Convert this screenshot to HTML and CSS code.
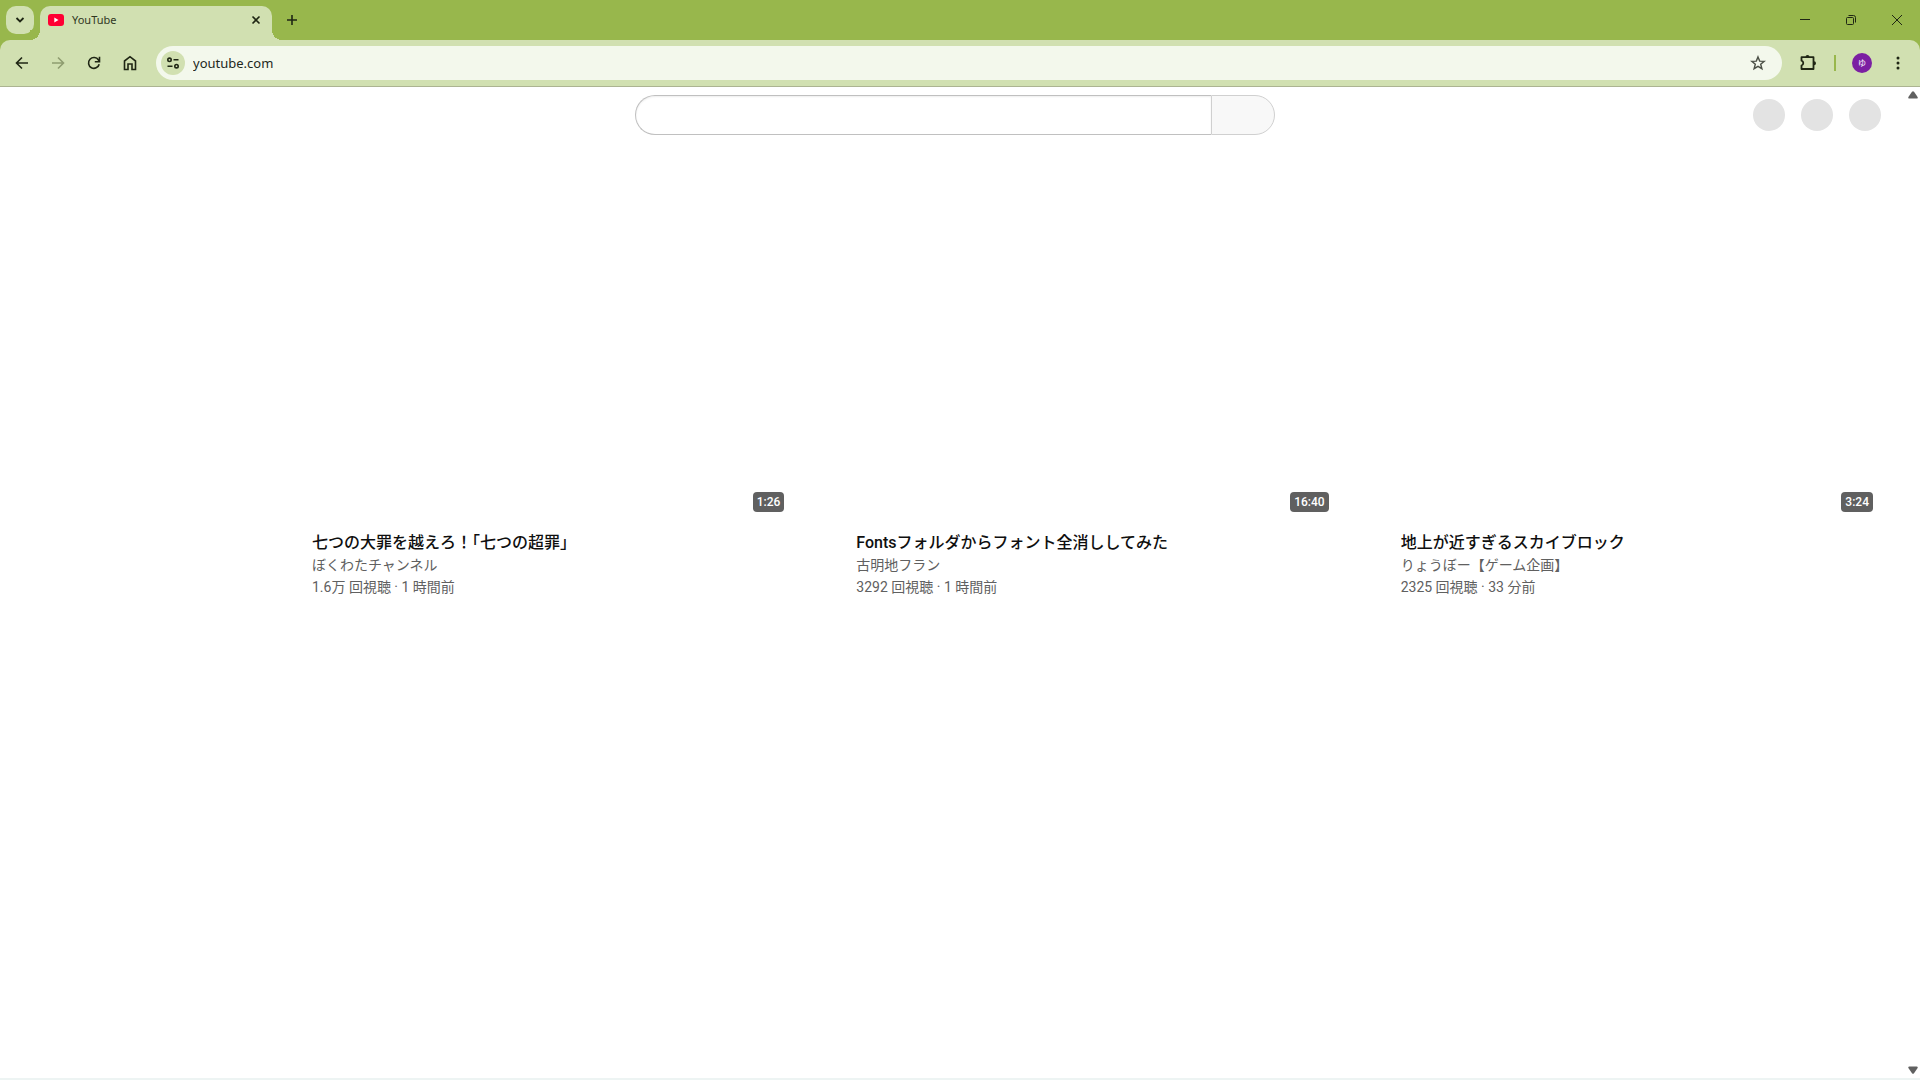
FILE: index.html
```html
<!DOCTYPE html>
<html lang="ja">
<head>
<meta charset="utf-8">
<title>YouTube</title>
<link rel="stylesheet" href="styles.css">
</head>
<body>
<header class="chrome">
  <div class="tab-strip">
    <button class="tab-search" aria-label="タブを検索"><svg width="12" height="12" viewBox="0 0 12 12"><path d="M2.500 4l3.500 3.500L9.500 4" class="line bold"/></svg></button>
    <div class="tab">
      <svg width="16" height="12" viewBox="0 0 16 12"><rect width="16" height="12" rx="3" fill="#ff0033"/><path d="M6.300 3.500v5l4.200-2.500z" fill="#fff"/></svg>
      <span class="tab-title">YouTube</span>
      <button class="tab-close" aria-label="閉じる"><svg width="10" height="10" viewBox="0 0 10 10"><path d="M1.500 1.500l7 7M8.500 1.500l-7 7" class="line"/></svg></button>
    </div>
    <button class="new-tab" aria-label="新しいタブ"><svg width="12" height="12" viewBox="0 0 12 12"><path d="M6 1v10M1 6h10" class="line"/></svg></button>
    <div class="window-controls">
      <button aria-label="最小化"><svg width="10" height="10" viewBox="0 0 10 10"><path d="M0 4.500h10" class="line thin"/></svg></button>
      <button aria-label="元に戻す"><svg width="10" height="10" viewBox="0 0 10 10"><rect x=".5" y="2.500" width="7" height="7" rx="1" class="line thin"/><path d="M2.500.5H7.500a2 2 0 0 1 2 2v5" class="line thin"/></svg></button>
      <button aria-label="閉じる"><svg width="10" height="10" viewBox="0 0 10 10"><path d="M0 0l10 10M10 0L0 10" class="line thin"/></svg></button>
    </div>
  </div>
  <div class="toolbar">
    <nav class="nav-buttons">
      <button aria-label="戻る"><svg width="14" height="14" viewBox="0 0 14 14"><path d="M13 7H2M7 1.500L1.500 7 7 12.500" class="line"/></svg></button>
      <button class="inactive" aria-label="進む" disabled><svg width="14" height="14" viewBox="0 0 14 14"><path d="M1 7h11M7 1.500L12.500 7 7 12.500" class="line"/></svg></button>
      <button aria-label="再読み込み"><svg width="14" height="14" viewBox="0 0 14 14"><path d="M12.200 8.200A5.400 5.400 0 1 1 11.500 4L12.500 5.500M12.500.8v4.900H7.800" class="line"/></svg></button>
      <button aria-label="ホーム"><svg width="14" height="16" viewBox="0 0 14 16"><path d="M1.500 6L7 1.700 12.500 6v8.500H9V9H5v5.500H1.500z" class="line"/></svg></button>
    </nav>
    <div class="omnibox">
      <button class="site-info" aria-label="サイト情報"><svg width="14" height="12" viewBox="0 0 14 12"><circle cx="3.500" cy="2.800" r="1.700" class="line"/><path d="M7.500 2.800H12.500M1.500 9.200H6.500" class="line"/><circle cx="10.500" cy="9.200" r="1.700" class="line"/></svg></button>
      <input class="address" type="text" value="youtube.com" aria-label="アドレス">
      <button class="bookmark" aria-label="ブックマーク"><svg width="16" height="16" viewBox="0 0 16 16"><path d="M8 1.900l1.700 4.200 4.500.3-3.500 2.900 1.200 4.400L8 11.300l-3.900 2.400 1.200-4.400-3.500-2.900 4.500-.3z" class="star"/></svg></button>
    </div>
    <div class="toolbar-end">
      <button aria-label="拡張機能"><svg width="18" height="18" viewBox="0 0 18 18"><path d="M2.500 3.200H14.500V15H2.500V11.500A2.500 2.500 0 0 0 2.500 6.700z" class="line bold join"/><path d="M6.500 3a2 2 0 0 1 4 0zM15 7.200a2 2 0 0 1 0 4z"/></svg></button>
      <span class="divider"></span>
      <button aria-label="プロフィール"><span class="profile">ゆ</span></button>
      <button aria-label="メニュー"><svg width="4" height="14" viewBox="0 0 4 14"><circle cx="2" cy="2" r="1.500"/><circle cx="2" cy="7" r="1.500"/><circle cx="2" cy="12" r="1.500"/></svg></button>
    </div>
  </div>
</header>
<div class="viewport">
  <div class="page">
    <div class="masthead">
      <form class="search">
        <input class="search-field" type="text" aria-label="検索">
        <button class="search-button" type="button" aria-label="検索"></button>
      </form>
      <div class="placeholders"><span class="dot"></span><span class="dot"></span><span class="dot"></span></div>
    </div>
    <main class="feed">
      <article class="video">
        <div class="thumb"><span class="duration">1:26</span></div>
        <div class="details">
          <h3 class="title">七つの大罪を越えろ！<span class="half-bracket">「</span>七つの超罪」</h3>
          <p class="meta">ぼくわたチャンネル</p>
          <p class="meta">1.6万 回視聴 · 1 時間前</p>
        </div>
      </article>
      <article class="video">
        <div class="thumb"><span class="duration">16:40</span></div>
        <div class="details">
          <h3 class="title">Fontsフォルダからフォント全消ししてみた</h3>
          <p class="meta">古明地フラン</p>
          <p class="meta">3292 回視聴 · 1 時間前</p>
        </div>
      </article>
      <article class="video">
        <div class="thumb"><span class="duration">3:24</span></div>
        <div class="details">
          <h3 class="title">地上が近すぎるスカイブロック</h3>
          <p class="meta">りょうぼー【ゲーム企画】</p>
          <p class="meta">2325 回視聴 · 33 分前</p>
        </div>
      </article>
    </main>
  </div>
  <div class="scrollbar">
    <button aria-label="上へ"><svg width="10" height="8" viewBox="0 0 10 8"><path d="M4 .7q1-1 2 0L9.600 6q.5 1.500-1 1.500h-7.200Q-.1 7.500.4 6z"/></svg></button>
    <button aria-label="下へ"><svg width="10" height="8" viewBox="0 0 10 8"><path d="M4 7.300q1 1 2 0L9.600 2q.5-1.500-1-1.500h-7.200Q-.1.5.4 2z"/></svg></button>
  </div>
</div>
</body>
</html>
```
FILE: styles.css
```css
* {
  box-sizing: border-box;
}

body {
  margin: 0;
  min-height: 100vh;
  display: flex;
  flex-direction: column;
  background: #fff;
  font-family: Roboto, "Noto Sans CJK JP", sans-serif;
}

button {
  display: flex;
  align-items: center;
  justify-content: center;
  padding: 0;
  border: 0;
  background: none;
  color: #1f2614;
}

svg {
  display: block;
  flex: none;
  fill: currentColor;
}

.line {
  fill: none;
  stroke: currentColor;
  stroke-width: 1.6;
}

.thin {
  stroke-width: 1;
}

.bold {
  stroke-width: 1.8;
}

.join {
  stroke-linejoin: round;
}

.star {
  fill: none;
  stroke: #4b5046;
  stroke-width: 1.4;
}

/* Browser frame */
.chrome {
  background: #98b74c;
}

.tab-strip {
  display: flex;
  height: 40px;
  padding: 6px 0 0 6px;
}

.tab-search {
  width: 28px;
  height: 28px;
  border-radius: 10px;
  background: #d1e0b1;
}

.tab {
  position: relative;
  display: flex;
  align-items: center;
  width: 232px;
  height: 34px;
  margin-left: 6px;
  padding: 0 10px 6px 8px;
  border-radius: 10px 10px 0 0;
  background: #d1e0b1;
}

.tab::before,
.tab::after {
  content: "";
  position: absolute;
  bottom: 0;
  width: 10px;
  height: 10px;
}

.tab::before {
  right: 100%;
  background: radial-gradient(circle at 0 0, #98b74c 10px, #d1e0b1 10px);
}

.tab::after {
  left: 100%;
  background: radial-gradient(circle at 100% 0, #98b74c 10px, #d1e0b1 10px);
}

.tab-title {
  flex: 1;
  margin-left: 8px;
  color: #30371f;
  font: 11px/16px "Noto Sans", sans-serif;
}

.tab-close {
  width: 12px;
  height: 16px;
}

.new-tab {
  width: 28px;
  height: 28px;
  margin-left: 6px;
}

.window-controls {
  display: flex;
  margin-left: auto;
}

.window-controls button {
  width: 46px;
  height: 28px;
}

.toolbar {
  display: flex;
  align-items: center;
  height: 47px;
  padding: 0 4px;
  border-bottom: 1px solid #acb492;
  border-radius: 10px 10px 0 0;
  background: #d1e0b1;
}

.nav-buttons,
.toolbar-end {
  display: flex;
  align-items: center;
}

.nav-buttons button,
.toolbar-end button {
  width: 36px;
  height: 34px;
}

.nav-buttons .inactive {
  color: #8f9d70;
}

.omnibox {
  flex: 1;
  display: flex;
  align-items: center;
  height: 34px;
  margin: 0 8px;
  padding: 0 16px 0 5px;
  border-radius: 17px;
  background: #f3f8ec;
}

.site-info {
  width: 24px;
  height: 24px;
  border-radius: 50%;
  background: #d1e0b1;
}

.address {
  flex: 1;
  min-width: 0;
  margin-left: 8px;
  padding: 0;
  border: 0;
  outline: 0;
  background: none;
  color: #23281c;
  font: 13px/20px "Noto Sans", sans-serif;
}

.divider {
  width: 2px;
  height: 16px;
  margin: 0 8px;
  background: #98b74c;
}

.profile {
  width: 20px;
  height: 20px;
  border-radius: 50%;
  background: #7b1fa2;
  color: #fff;
  font: 8px/20px "Noto Sans CJK JP", sans-serif;
  text-align: center;
}

/* Page */
.viewport {
  flex: 1;
  display: flex;
  border-bottom: 2px solid #edf4f3;
}

.page {
  flex: 1;
  min-width: 0;
}

.masthead {
  display: grid;
  grid-template-columns: 1fr minmax(0, 640px) 1fr;
  align-items: center;
  height: 56px;
  padding: 0 24px 0 28px;
}

.search {
  grid-column: 2;
  display: flex;
  height: 40px;
}

.search-field {
  flex: 1;
  min-width: 0;
  border: 1px solid #c0c0c0;
  border-right: 0;
  border-radius: 20px 0 0 20px;
  outline: 0;
  background: #fff;
  box-shadow: inset 0 1px 2px #eee;
}

.search-button {
  width: 64px;
  border: 1px solid #d0d0d0;
  border-radius: 0 20px 20px 0;
  background: #f8f8f8;
}

.placeholders {
  display: flex;
  justify-content: flex-end;
  gap: 16px;
}

.dot {
  width: 32px;
  height: 32px;
  border-radius: 50%;
  background: #e3e3e3;
}

.feed {
  display: grid;
  grid-template-columns: repeat(3, minmax(0, 1fr));
  gap: 16px;
  padding: 80px 24px 24px 264px;
}

.thumb {
  display: flex;
  align-items: flex-end;
  justify-content: flex-end;
  aspect-ratio: 16 / 9;
  padding: 8px;
}

.duration {
  padding: 0 4px;
  border-radius: 4px;
  background: #606060;
  color: #fff;
  font-size: 12px;
  font-weight: 500;
  line-height: 20px;
}

.details {
  padding: 12px 24px 0 48px;
}

.title {
  margin: 0;
  color: #0f0f0f;
  font-size: 16px;
  font-weight: 500;
  line-height: 22px;
}

.half-bracket {
  font-feature-settings: "halt";
}

.meta {
  margin: 0;
  color: #606060;
  font-size: 14px;
  line-height: 22px;
}

.scrollbar {
  display: flex;
  flex-direction: column;
  justify-content: space-between;
  width: 15px;
}

.scrollbar button {
  width: 15px;
  height: 16px;
  color: #606060;
}
```
